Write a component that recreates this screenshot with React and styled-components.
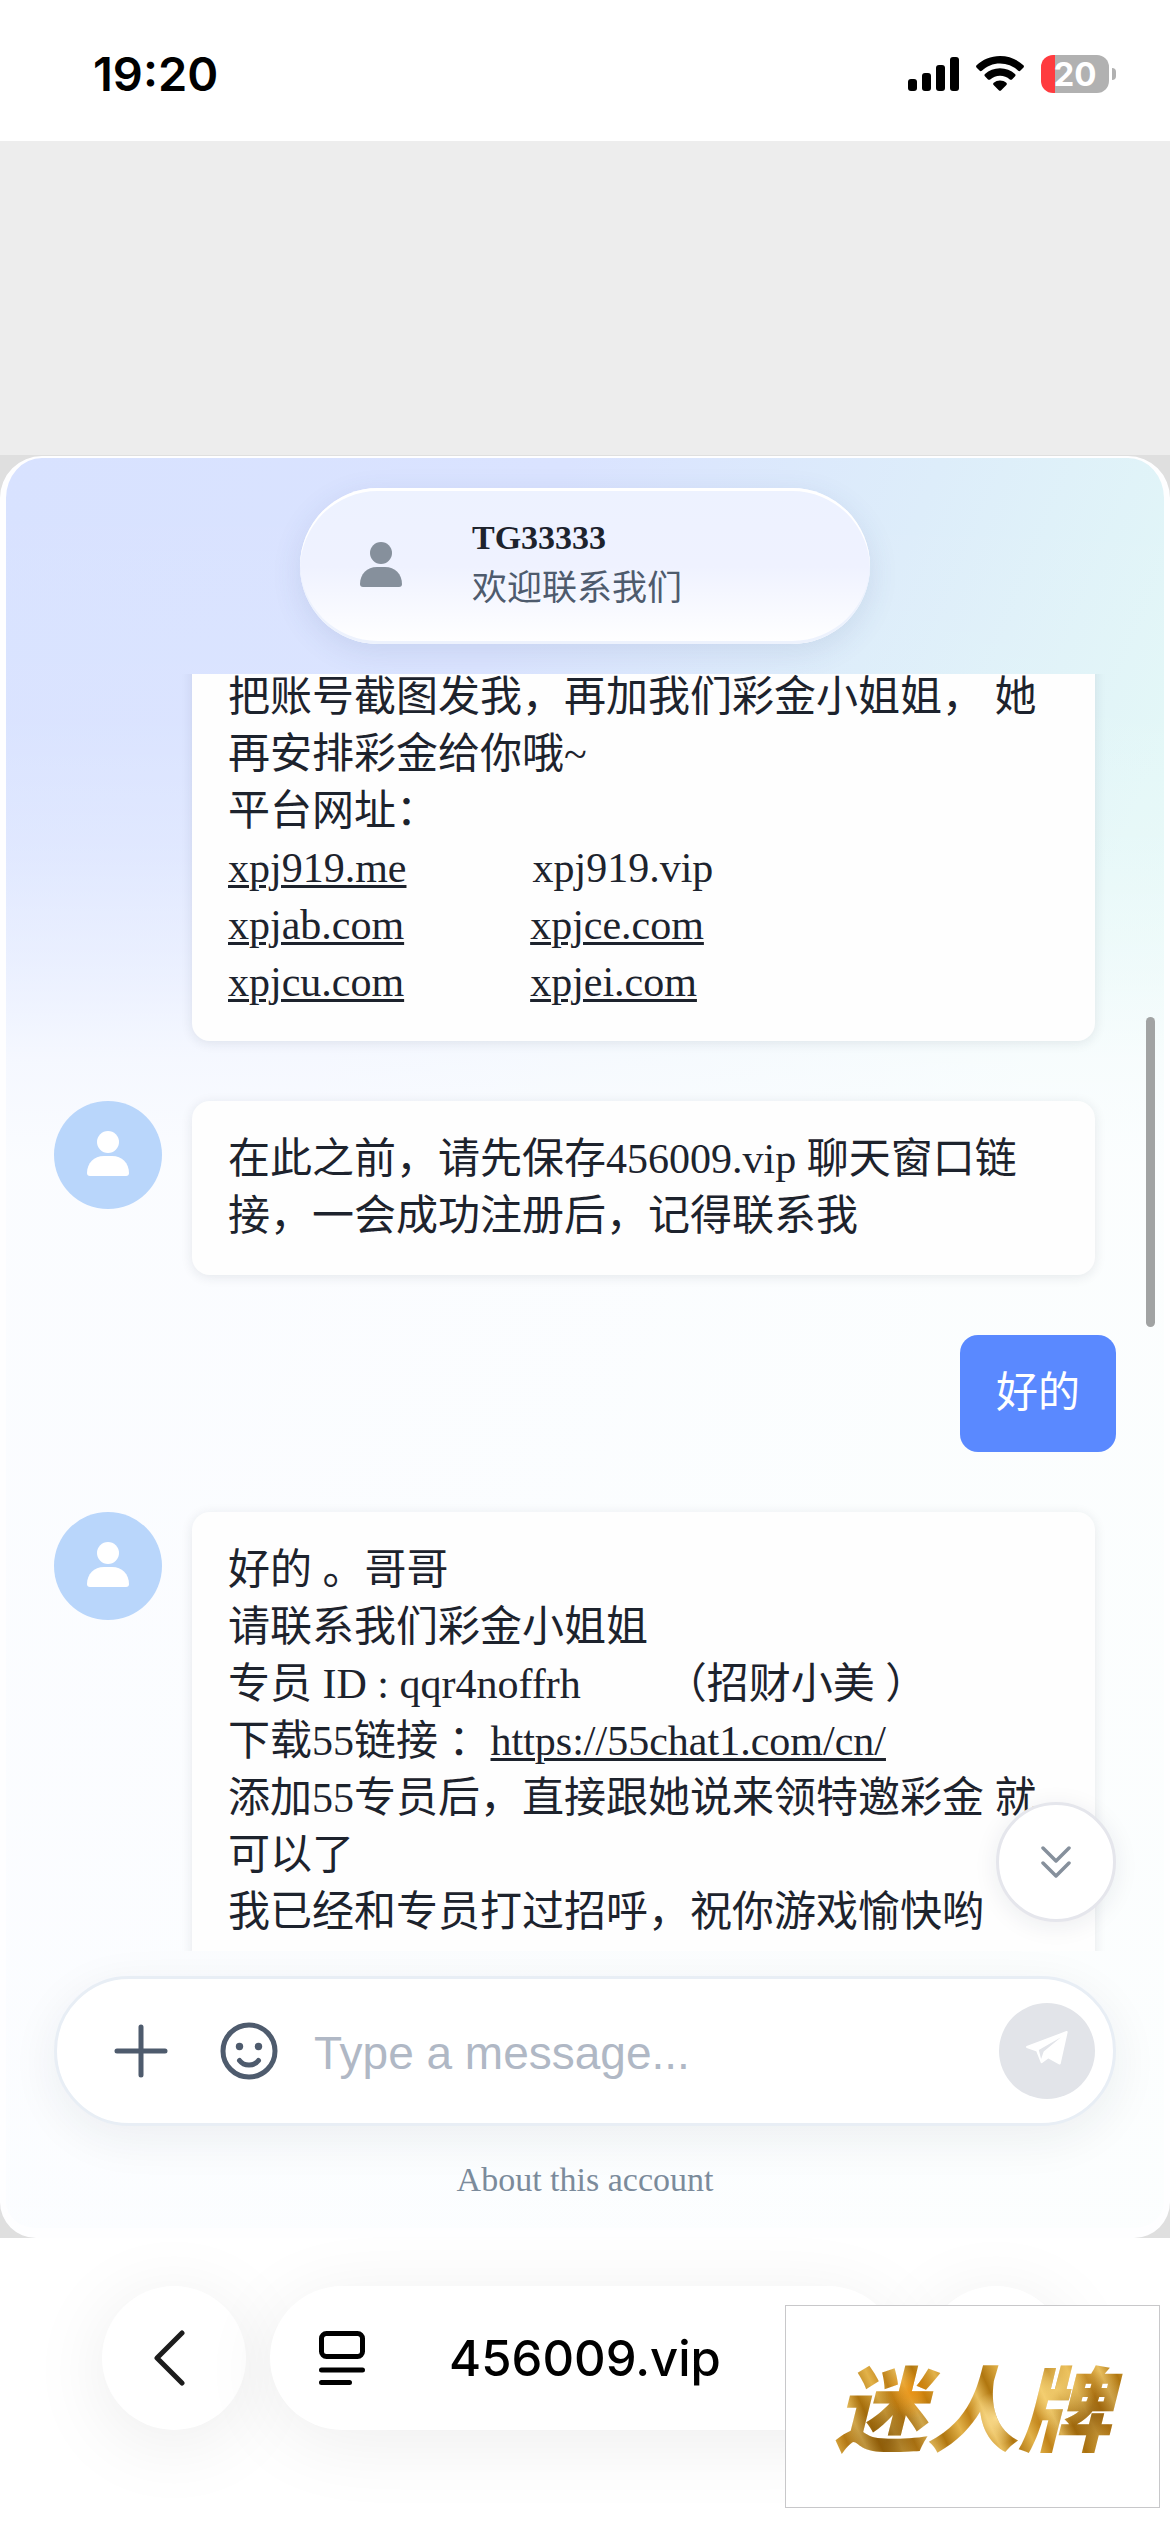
import React from 'react';
import styled, { createGlobalStyle } from 'styled-components';

const serif = `'Liberation Serif', 'Noto Sans CJK SC', serif`;
const sans = `'Liberation Sans', 'Noto Sans CJK SC', sans-serif`;
const system = `Inter, 'Noto Sans CJK SC', sans-serif`;

const GlobalStyle = createGlobalStyle`
  * {
    box-sizing: border-box;
  }

  body {
    margin: 0;
    background: #fff;
    font-family: ${serif};
    color: #1d232d;
  }

  button {
    border: 0;
    padding: 0;
    background: none;
    font: inherit;
    color: inherit;
    cursor: pointer;
  }

  svg {
    display: block;
    flex: none;
  }
`;

const Page = styled.div`
  display: flex;
  flex-direction: column;
  height: 100vh;
  overflow: hidden;
`;

const StatusBar = styled.header`
  display: flex;
  align-items: center;
  justify-content: space-between;
  height: 141px;
  padding: 7px 54px 0 93px;
  font-family: ${system};
  color: #000;
`;

const Clock = styled.time`
  font-size: 47px;
  line-height: 56px;
  font-weight: 600;
`;

const StatusIcons = styled.div`
  display: flex;
  align-items: center;
  gap: 17px;
`;

const Battery = styled.div`
  display: flex;
  align-items: center;
  gap: 3px;

  &::after {
    content: '';
    width: 4px;
    height: 12px;
    border-radius: 0 6px 6px 0;
    background: #b1b1b1;
  }
`;

const BatteryBody = styled.div`
  width: 68px;
  height: 38px;
  border-radius: 12px;
  background: linear-gradient(90deg, #ff3b3f 14px, #b1b1b1 14px);
  color: #fff;
  font-size: 33px;
  line-height: 38px;
  font-weight: 700;
  text-align: center;
`;

const Spacer = styled.div`
  height: 314px;
  background: #ededed;
`;

const Frame = styled.main`
  flex: 1;
  min-height: 0;
  display: flex;
  padding-top: 1px;
  background: #dfdfdf;
`;

const ChatCard = styled.section`
  flex: 1;
  display: flex;
  flex-direction: column;
  min-width: 0;
  border: solid #fefeff;
  border-width: 2px 6px 10px;
  border-radius: 42px 42px 36px 36px;
  background:
    linear-gradient(
      180deg,
      rgba(253, 254, 255, 0) 0%,
      rgba(253, 254, 255, 0.05) 15%,
      rgba(253, 254, 255, 0.2) 22%,
      rgba(253, 254, 255, 0.5) 29%,
      rgba(253, 254, 255, 0.78) 34%,
      rgba(253, 254, 255, 0.93) 40%,
      rgba(253, 254, 255, 0.95) 100%
    ),
    linear-gradient(112deg, #d8e2ff 0%, #dae3ff 30%, #ddedfa 50%, #e2f7f7 68%, #e4faf3 100%);
`;

const ChatHeader = styled.div`
  display: flex;
  justify-content: center;
  padding: 30px;
`;

const AccountPill = styled.div`
  display: flex;
  align-items: center;
  gap: 70px;
  width: 570px;
  height: 156px;
  padding: 0 0 4px 60px;
  border-radius: 78px;
  background: linear-gradient(180deg, #edf2ff 0%, #eff2ff 50%, #fff 100%);
  box-shadow:
    inset 0 3px 0 #fff,
    inset 0 -3px 0 #edf2fd,
    0 8px 30px rgba(60, 80, 130, 0.12);
  color: #86909c;
`;

const AccountName = styled.h1`
  margin: 0;
  font-size: 34px;
  line-height: 50px;
  font-weight: 700;
  color: #1d232d;
`;

const AccountNote = styled.p`
  margin: 0;
  font-size: 35px;
  line-height: 52px;
  color: #4e5b6d;
`;

const MessagePane = styled.div`
  position: relative;
  flex: 1;
  min-height: 0;
  overflow: hidden;
  padding: 0 48px;
`;

/* starts part way through the oldest message on screen */
const MessageList = styled.div`
  display: flex;
  flex-direction: column;
  gap: 60px;
  margin-top: -35px;
`;

const MessageRow = styled.div`
  display: flex;
  align-items: flex-start;
  gap: 30px;
  justify-content: ${(props) => (props.$own ? 'flex-end' : 'flex-start')};
  padding-right: ${(props) => (props.$own ? '0' : '21px')};
`;

const Avatar = styled.div`
  flex: none;
  display: flex;
  align-items: center;
  justify-content: center;
  width: 108px;
  height: 108px;
  padding-bottom: 3px;
  border-radius: 50%;
  background: ${(props) => (props.$hidden ? 'transparent' : '#b9d6fb')};
  color: #fff;
`;

const Bubble = styled.div`
  flex: ${(props) => (props.$own ? 'none' : '1')};
  min-width: 0;
  padding: 30px 36px;
  border-radius: 18px;
  background: ${(props) => (props.$own ? '#5a89ff' : '#fefefe')};
  box-shadow: ${(props) => (props.$own ? 'none' : '0 2px 12px rgba(30, 40, 60, 0.1)')};
  color: ${(props) => (props.$own ? '#fff' : '#1d232d')};
  font-size: 42px;
  line-height: 57px;
`;

const Line = styled.p`
  margin: 0;
  white-space: pre-wrap;
`;

const TextLink = styled.a`
  color: inherit;
  text-decoration: underline;
  text-decoration-thickness: 3px;
  text-underline-offset: 3px;
`;

const ScrollThumb = styled.div`
  position: absolute;
  top: 343px;
  right: 9px;
  width: 9px;
  height: 310px;
  border-radius: 5px;
  background: #a1a3a3;
`;

const JumpButton = styled.button`
  position: absolute;
  right: 48px;
  bottom: 29px;
  display: flex;
  align-items: center;
  justify-content: center;
  width: 120px;
  height: 120px;
  border: 3px solid #e5e6ec;
  border-radius: 50%;
  background: #fff;
  box-shadow: 0 4px 24px rgba(30, 40, 60, 0.08);
  color: #86909c;
`;

const Composer = styled.form`
  display: flex;
  align-items: center;
  height: 150px;
  margin: 25px 48px 0;
  padding: 0 18px 0 57px;
  border: 3px solid #e8eef5;
  border-radius: 75px;
  background: #fff;
  box-shadow: 0 12px 48px rgba(30, 40, 60, 0.07);
  color: #4e5b6d;
`;

const IconButton = styled.button`
  display: flex;
  margin-right: ${(props) => props.$gap}px;
`;

const MessageInput = styled.input`
  flex: 1;
  min-width: 0;
  padding: 4px 0 0;
  border: 0;
  outline: 0;
  background: none;
  font-family: ${sans};
  font-size: 46px;
  line-height: 60px;
  color: #1d232d;

  &::placeholder {
    color: #b0b8c5;
    opacity: 1;
  }
`;

const SendButton = styled.button`
  display: flex;
  align-items: center;
  justify-content: center;
  width: 96px;
  height: 96px;
  padding-bottom: 6px;
  border-radius: 50%;
  background: #e2e4e9;
  color: #fff;
`;

const AboutLink = styled.a`
  align-self: center;
  margin: 36px 0 30px;
  font-size: 34px;
  line-height: 36px;
  color: #7b8b9b;
  text-decoration: none;
`;

const BrowserBar = styled.nav`
  display: flex;
  gap: 24px;
  padding: 48px 102px 102px;
  font-family: ${system};
  color: #000;
`;

const RoundButton = styled.button`
  display: flex;
  align-items: center;
  justify-content: center;
  width: 144px;
  height: 144px;
  border-radius: 50%;
  background: #fff;
  box-shadow: 0 12px 80px rgba(0, 0, 0, 0.08);
`;

const AddressBar = styled.div`
  flex: 1;
  display: grid;
  grid-template-columns: 1fr auto 1fr;
  align-items: center;
  height: 144px;
  padding: 0 49px;
  border-radius: 72px;
  background: #fff;
  box-shadow: 0 12px 80px rgba(0, 0, 0, 0.07);
`;

const Address = styled.button`
  padding-top: 2px;
  font-size: 49px;
  line-height: 60px;
  font-weight: 500;
`;

const Watermark = styled.div`
  position: fixed;
  right: 10px;
  bottom: 24px;
  display: flex;
  align-items: center;
  justify-content: center;
  width: 375px;
  height: 203px;
  padding-bottom: 6px;
  border: 1px solid #c8c8ca;
  background: #fff;
`;

const WatermarkText = styled.span`
  padding: 0 12px;
  font-family: 'Noto Sans CJK SC', sans-serif;
  font-size: 92px;
  line-height: 120px;
  font-weight: 900;
  font-style: italic;
  color: transparent;
  background:
    radial-gradient(circle at 30% 40%, rgba(236, 140, 8, 0.8), transparent 12%),
    radial-gradient(circle at 58% 62%, rgba(255, 226, 150, 0.9), transparent 14%),
    radial-gradient(circle at 78% 38%, rgba(255, 222, 130, 0.8), transparent 16%),
    radial-gradient(circle at 22% 80%, rgba(110, 68, 2, 0.6), transparent 22%),
    radial-gradient(circle at 90% 60%, rgba(120, 72, 4, 0.6), transparent 16%),
    repeating-linear-gradient(65deg, #b0760f 0px, #e2b24a 18px, #c08218 32px, #e8be5e 47px, #b0760f 61px);
  -webkit-background-clip: text;
  background-clip: text;
`;

const SignalIcon = () => (
  <svg width="51" height="34" viewBox="0 0 51 34" fill="currentColor">
    <rect x="0" y="22" width="9" height="12" rx="3" />
    <rect x="14" y="16" width="9" height="18" rx="3" />
    <rect x="28" y="8" width="9" height="26" rx="3" />
    <rect x="42" y="0" width="9" height="34" rx="3" />
  </svg>
);

const WifiIcon = () => (
  <svg width="48" height="36" viewBox="0 0 48 36" fill="currentColor">
    <path d="M24 0c9.200 0 17.300 3.500 23.400 9.300.7.700.7 1.600.1 2.300l-3 3c-.7.700-1.600.7-2.300.1A26.400 26.400 0 0 0 24 7.400c-7 0-13.400 2.700-18.200 7.300-.7.600-1.600.6-2.300-.1l-3-3c-.6-.7-.6-1.600.1-2.300C6.700 3.500 14.800 0 24 0z" />
    <path d="M24 12.300c5.800 0 11 2.100 15 5.700.7.600.7 1.700.1 2.300l-3.100 3.100c-.6.600-1.500.6-2.200.1A14.700 14.700 0 0 0 24 19.800c-3.700 0-7.100 1.400-9.800 3.700-.7.500-1.600.5-2.200-.1l-3.100-3.100c-.6-.6-.6-1.700.1-2.300 4-3.600 9.200-5.700 15-5.700z" />
    <path d="M24 24.500c2.400 0 4.600.8 6.300 2.200.7.600.7 1.600.1 2.200l-5.200 5.300c-.7.700-1.700.7-2.400 0l-5.200-5.300c-.6-.6-.6-1.600.1-2.200a10 10 0 0 1 6.300-2.200z" />
  </svg>
);

const PersonIcon = () => (
  <svg width="42" height="45" viewBox="0 0 42 45" fill="currentColor">
    <circle cx="21" cy="11" r="11" />
    <path d="M0 42C0 32 7 25 17 25h8c10 0 17 7 17 17 0 2-1 3-3 3H3c-2 0-3-1-3-3z" />
  </svg>
);

const DoubleDownIcon = () => (
  <svg width="30" height="32" viewBox="0 0 30 32" fill="none" stroke="currentColor" strokeWidth="3.500" strokeLinecap="round" strokeLinejoin="round">
    <path d="M2 2l13 13L28 2M2 17l13 13 13-13" />
  </svg>
);

const PlusIcon = () => (
  <svg width="54" height="54" viewBox="0 0 54 54" fill="none" stroke="currentColor" strokeWidth="5" strokeLinecap="round">
    <path d="M27 3v48M3 27h48" />
  </svg>
);

const SmileIcon = () => (
  <svg width="58" height="58" viewBox="0 0 58 58" fill="none" stroke="currentColor" strokeWidth="5" strokeLinecap="round">
    <circle cx="29" cy="29" r="26" />
    <path d="M19.500 38.500c4.500 6 14.500 6 19 0" />
    <circle cx="19.500" cy="24.500" r="3.700" fill="currentColor" stroke="none" />
    <circle cx="38.500" cy="24.500" r="3.700" fill="currentColor" stroke="none" />
  </svg>
);

const PlaneIcon = () => (
  <svg width="42" height="34" viewBox="0 0 42 34" strokeLinejoin="round">
    <path d="M1 16L40.700 1l-7 31.500-11.300-6.200-6.800 4.900L11 19.500z" fill="currentColor" stroke="currentColor" strokeWidth="2" />
    <path d="M35 6.300L12.800 19l2.300 9 2.600-7.400z" fill="#e2e4e9" />
  </svg>
);

const BackIcon = () => (
  <svg width="40" height="56" viewBox="0 0 40 56" fill="none" stroke="#1c1c1c" strokeWidth="5" strokeLinecap="round" strokeLinejoin="round">
    <path d="M28 3L3 28l25 25" />
  </svg>
);

const PageIcon = () => (
  <svg width="46" height="54" viewBox="0 0 46 54" fill="none" stroke="currentColor" strokeWidth="5" strokeLinecap="round">
    <rect x="2.500" y="2.500" width="41" height="23" rx="5" />
    <path d="M2.500 39h41M2.500 51.500h28" />
  </svg>
);

const MoreIcon = () => (
  <svg width="48" height="10" viewBox="0 0 48 10" fill="currentColor">
    <circle cx="5" cy="5" r="4" />
    <circle cx="24" cy="5" r="4" />
    <circle cx="43" cy="5" r="4" />
  </svg>
);

const gap = ' '.repeat(12);

// every message is a list of lines, every line a list of plain texts and links
const messages = [
  {
    id: 1,
    continued: true,
    lines: [
      ['把账号截图发我，再加我们彩金小姐姐， 她再安排彩金给你哦~'],
      ['平台网址：'],
      [{ url: 'xpj919.me' }, gap, 'xpj919.vip'],
      [{ url: 'xpjab.com' }, gap, { url: 'xpjce.com' }],
      [{ url: 'xpjcu.com' }, gap, { url: 'xpjei.com' }],
    ],
  },
  {
    id: 2,
    lines: [['在此之前，请先保存456009.vip 聊天窗口链接，一会成功注册后，记得联系我']],
  },
  { id: 3, own: true, lines: [['好的']] },
  {
    id: 4,
    lines: [
      ['好的 。哥哥'],
      ['请联系我们彩金小姐姐'],
      ['专员 ID : qqr4noffrh' + ' '.repeat(8) + '（招财小美 ）'],
      ['下载55链接 ：', { url: 'https://55chat1.com/cn/' }],
      ['添加55专员后，直接跟她说来领特邀彩金 就可以了'],
      ['我已经和专员打过招呼，祝你游戏愉快哟'],
    ],
  },
];

const Message = ({ message }) => (
  <MessageRow $own={message.own}>
    {!message.own && (
      <Avatar $hidden={message.continued}>{!message.continued && <PersonIcon />}</Avatar>
    )}
    <Bubble $own={message.own}>
      {message.lines.map((line, lineIndex) => (
        <Line key={lineIndex}>
          {line.map((part, index) =>
            part.url ? (
              <TextLink key={index} href="#">
                {part.url}
              </TextLink>
            ) : (
              <React.Fragment key={index}>{part}</React.Fragment>
            )
          )}
        </Line>
      ))}
    </Bubble>
  </MessageRow>
);

const App = () => {
  return (
    <Page lang="zh-CN">
      <GlobalStyle />
      <StatusBar>
        <Clock>19:20</Clock>
        <StatusIcons>
          <SignalIcon />
          <WifiIcon />
          <Battery>
            <BatteryBody>20</BatteryBody>
          </Battery>
        </StatusIcons>
      </StatusBar>
      <Spacer />
      <Frame>
        <ChatCard>
          <ChatHeader>
            <AccountPill>
              <PersonIcon />
              <div>
                <AccountName>TG33333</AccountName>
                <AccountNote>欢迎联系我们</AccountNote>
              </div>
            </AccountPill>
          </ChatHeader>
          <MessagePane>
            <MessageList>
              {messages.map((message) => (
                <Message key={message.id} message={message} />
              ))}
            </MessageList>
            <ScrollThumb />
            <JumpButton type="button" aria-label="Jump to latest">
              <DoubleDownIcon />
            </JumpButton>
          </MessagePane>
          <Composer onSubmit={(e) => e.preventDefault()}>
            <IconButton type="button" aria-label="Add attachment" $gap={52}>
              <PlusIcon />
            </IconButton>
            <IconButton type="button" aria-label="Emoji" $gap={36}>
              <SmileIcon />
            </IconButton>
            <MessageInput type="text" aria-label="Message" placeholder="Type a message..." />
            <SendButton type="submit" aria-label="Send">
              <PlaneIcon />
            </SendButton>
          </Composer>
          <AboutLink href="#">About this account</AboutLink>
        </ChatCard>
      </Frame>
      <BrowserBar>
        <RoundButton type="button" aria-label="Back">
          <BackIcon />
        </RoundButton>
        <AddressBar>
          <PageIcon />
          <Address type="button">456009.vip</Address>
        </AddressBar>
        <RoundButton type="button" aria-label="More">
          <MoreIcon />
        </RoundButton>
      </BrowserBar>
      <Watermark>
        <WatermarkText>迷人牌</WatermarkText>
      </Watermark>
    </Page>
  );
};

export default App;
